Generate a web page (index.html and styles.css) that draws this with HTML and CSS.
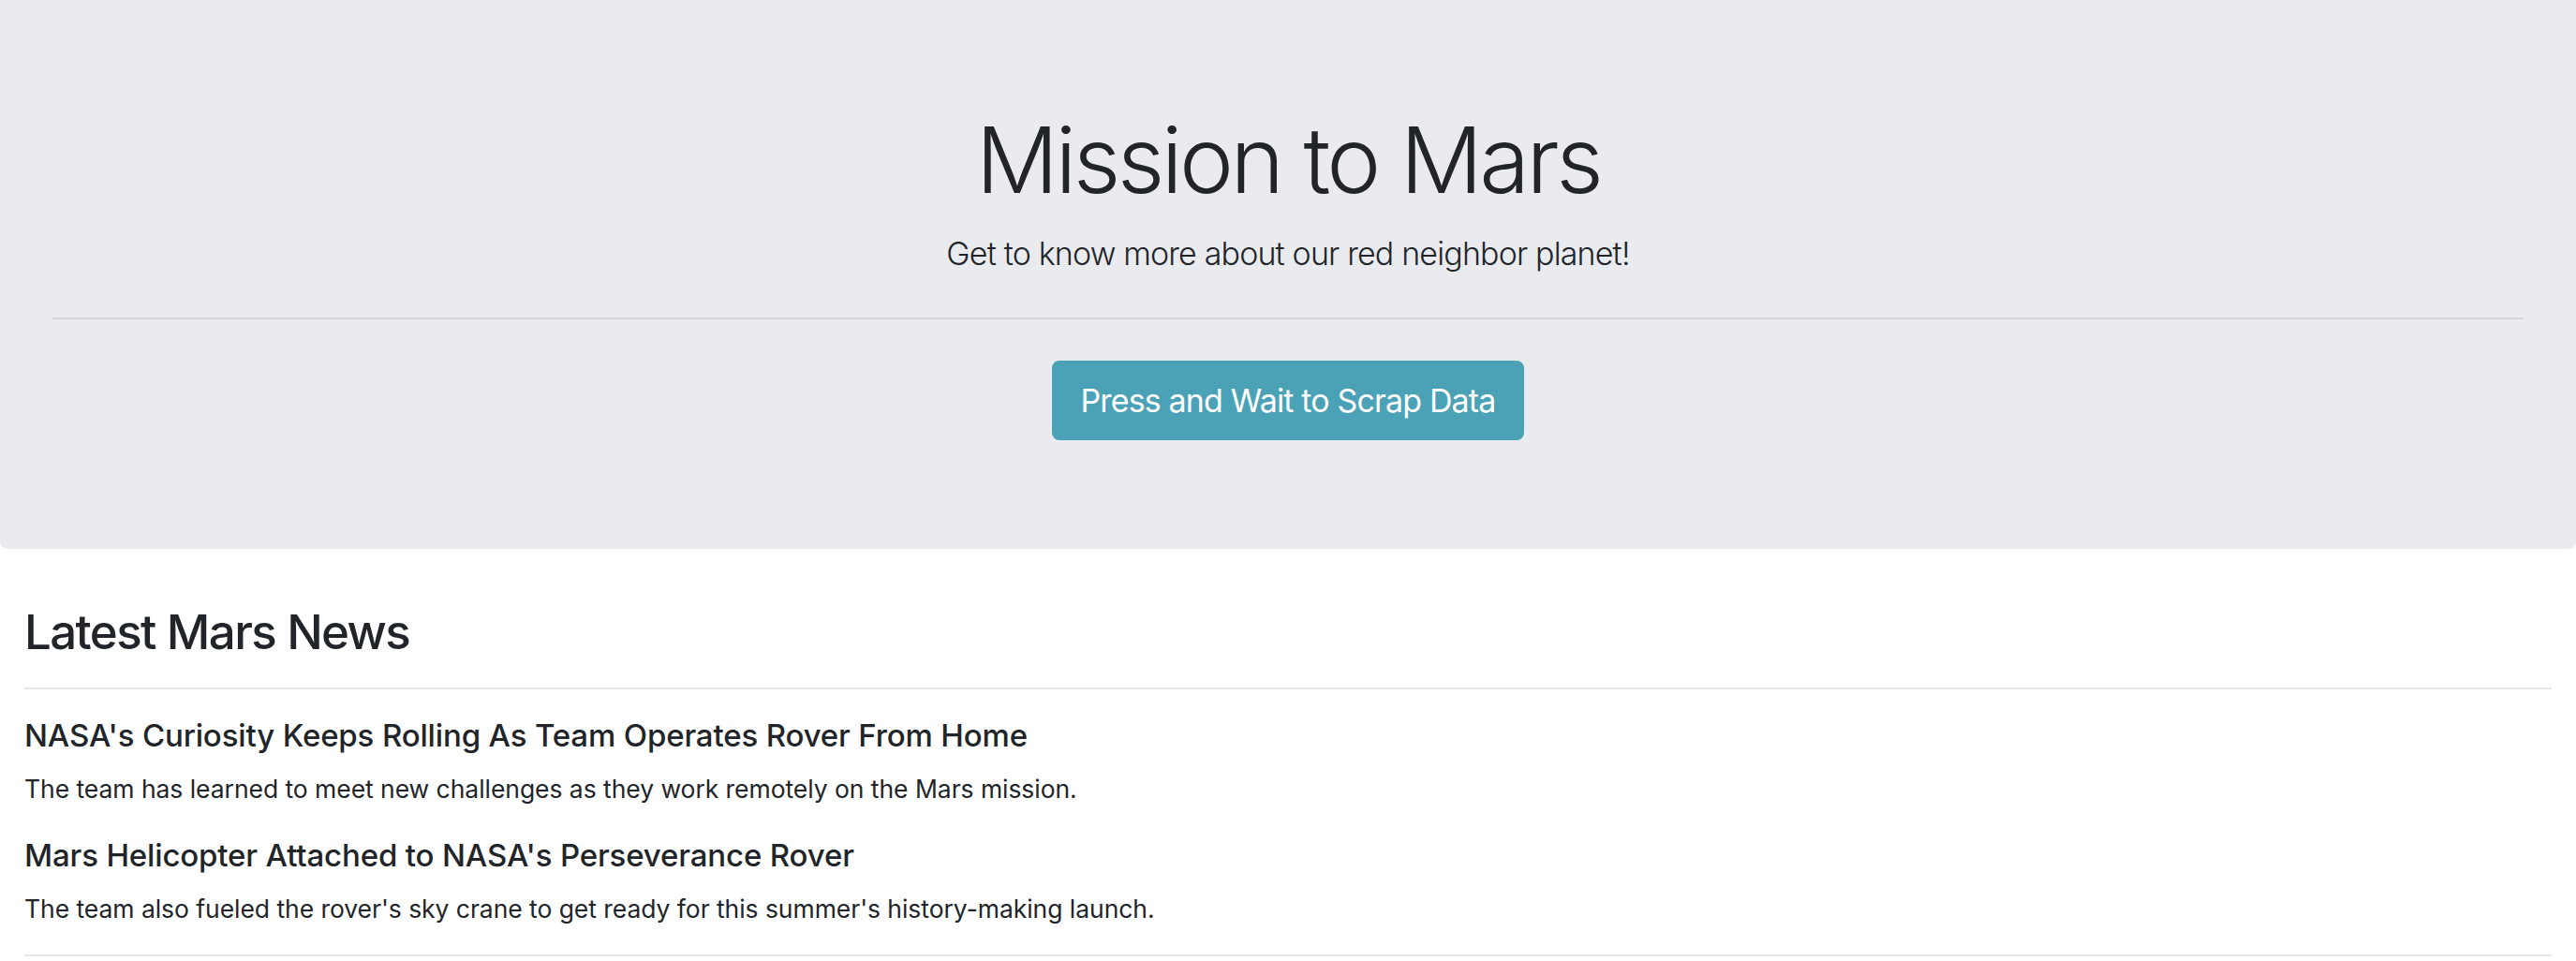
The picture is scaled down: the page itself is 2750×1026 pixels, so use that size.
FILE: index.html
```html
<!DOCTYPE html>
<html lang="en">
<head>
<meta charset="utf-8">
<title>Mission to Mars</title>
<link rel="stylesheet" href="styles.css">
</head>
<body>
  <header class="jumbotron">
    <h1 class="display">Mission to Mars</h1>
    <p class="lead">Get to know more about our red neighbor planet!</p>
    <hr class="jumbo-rule">
    <div class="actions">
      <a class="btn" href="#">Press and Wait to Scrap Data</a>
    </div>
  </header>
  <main class="container">
    <h2 class="section-title">Latest Mars News</h2>
    <hr class="rule">
    <article class="news">
      <h5 class="news-title">NASA's Curiosity Keeps Rolling As Team Operates Rover From Home</h5>
      <p class="news-text">The team has learned to meet new challenges as they work remotely on the Mars mission.</p>
    </article>
    <article class="news">
      <h5 class="news-title">Mars Helicopter Attached to NASA's Perseverance Rover</h5>
      <p class="news-text">The team also fueled the rover's sky crane to get ready for this summer's history-making launch.</p>
    </article>
    <hr class="rule">
  </main>
</body>
</html>
```
FILE: styles.css
```css
html, body {
  margin: 0;
  padding: 0;
  background: #ffffff;
}
body {
  font-family: Inter, "Noto Sans", "Liberation Sans", sans-serif;
  color: #212529;
  font-size: 28px;
  line-height: 1.5;
}
.jumbotron {
  background: #eaebef;
  padding: 112px 56px 116px;
  margin: 0 0 58px;
  border-radius: 0 0 8px 8px;
  text-align: center;
}
.display {
  margin: 0 0 15px;
  font-size: 98px;
  font-weight: 300;
  line-height: 118px;
  letter-spacing: -3.6px;
}
.lead {
  margin: 0;
  font-size: 34px;
  font-weight: 300;
  line-height: 52px;
  letter-spacing: -0.85px;
}
.jumbo-rule {
  margin: 42px 0 44px;
  border: 0;
  border-top: 2px solid #d4d6da;
  height: 0;
}
.actions {
  display: flex;
  justify-content: center;
}
.btn {
  display: inline-block;
  background: #4ba2b7;
  color: #ffffff;
  border: 2px solid #4ba2b7;
  border-radius: 8px;
  padding: 15px 28px 14px;
  font-size: 34px;
  line-height: 52px;
  font-weight: 400;
  text-decoration: none;
  letter-spacing: -0.85px;
}
.container {
  padding: 0 26px;
}
.section-title {
  margin: 0;
  font-size: 51px;
  font-weight: 500;
  line-height: 62px;
  letter-spacing: -1.6px;
}
.rule {
  margin: 28px 0;
  border: 0;
  border-top: 2px solid #e6e6e6;
  height: 0;
}
.news-title {
  margin: 0 0 15px;
  font-size: 33px;
  font-weight: 500;
  line-height: 42px;
  letter-spacing: -0.15px;
}
.news-text {
  margin: 0 0 29px;
  font-size: 26.5px;
  line-height: 42px;
  letter-spacing: -0.05px;
}
.news:last-of-type .news-text {
  margin-bottom: 0;
}
```
